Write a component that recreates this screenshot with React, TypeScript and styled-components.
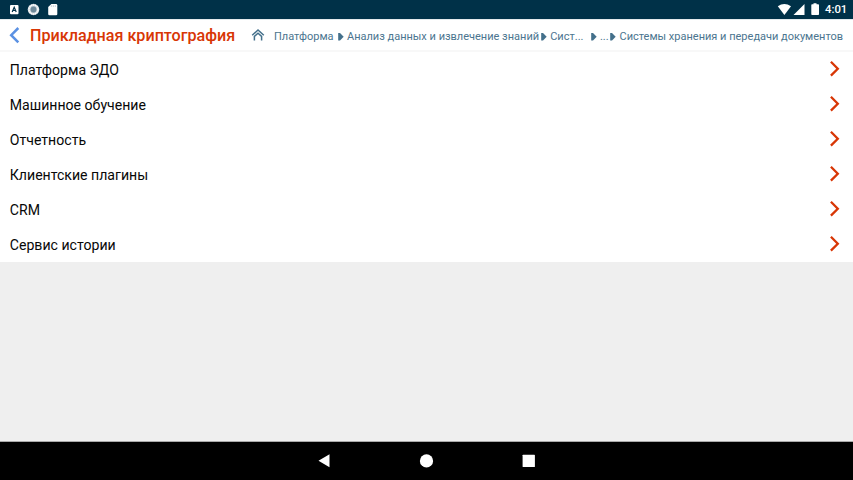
import React from "react";
import styled, { createGlobalStyle } from "styled-components";

const GlobalStyle = createGlobalStyle`
  * { box-sizing: border-box; }
  body { margin: 0; background: #efefef; font-family: Roboto, "Noto Sans", sans-serif; }
  svg { display: block; flex: none; }
`;

const Screen = styled.div`
  display: flex;
  flex-direction: column;
  width: 853px;
  height: 480px;
  overflow: hidden;
  background: #efefef;
`;

const StatusBar = styled.header`
  display: flex;
  justify-content: space-between;
  flex: none;
  height: 19px;
  background: #003148;
`;

const Clock = styled.time`
  width: 28px;
  font-size: 11.3px;
  font-weight: 500;
  line-height: 20px;
  color: #fff;
  white-space: nowrap;
`;

const StatusGroup = styled.div`
  display: flex;
`;

const Header = styled.nav`
  display: flex;
  flex: none;
  height: 33px;
  background: #fff;
  border-top: 1px solid #e4eaed;
  border-bottom: 2px solid #f8f8f8;
`;

const Title = styled.h1`
  flex: none;
  width: 221px;
  margin: 0;
  font-size: 16.15px;
  font-weight: 500;
  line-height: 31px;
  color: #d83605;
  white-space: nowrap;
`;

const Crumb = styled.span<{ $width: number }>`
  flex: none;
  width: ${(p) => p.$width}px;
  font-size: 11px;
  line-height: 34px;
  color: #4b758f;
  white-space: nowrap;
`;

const List = styled.ul`
  flex: none;
  margin: 0;
  padding: 0;
  list-style: none;
  background: #fff;
`;

const Row = styled.li`
  display: flex;
  justify-content: space-between;
  height: 35px;
  padding: 0 12px 0 9.8px;
  font-size: 14.1px;
  line-height: 36px;
  color: #080808;
`;

const NavBar = styled.footer`
  display: flex;
  justify-content: center;
  flex: none;
  height: 39px;
  margin-top: auto;
  background: #000;
  border-top: 1px solid #aaa;
`;

const Separator = () => (
  <svg width="10" height="30" viewBox="0 0 10 30">
    <path d="M1.2 13h1.8L6.7 16.8 3 20.6H1.2z" fill="#44708b" />
  </svg>
);

const RowArrow = () => (
  <svg width="12" height="35" viewBox="0 0 12 35">
    <path d="M1.9 9.8l6.9 6.9-6.9 6.9" fill="none" stroke="#d83605" strokeWidth="2.3" />
  </svg>
);

const StatusIcons = () => (
  <svg width="62" height="19" viewBox="0 0 62 19">
    <rect x="10" y="5" width="8.5" height="9.3" rx="1" fill="#fff" />
    <path d="M12.2 12l2-4.8 2 4.8M13 10.5h2.5" fill="none" stroke="#003148" strokeWidth="1.2" />
    <circle cx="33.5" cy="9.5" r="5.8" fill="#c5d0d7" />
    <circle cx="33.5" cy="9.5" r="4.5" fill="none" stroke="#fff" strokeWidth="1.4" strokeDasharray="1.5 .5" />
    <circle cx="33.5" cy="9.5" r="2.9" fill="#6d899a" />
    <path d="M51.4 4H56q1.3 0 1.3 1.3v8.6q0 1.3-1.3 1.3h-6.5q-1.3 0-1.3-1.3V7z" fill="#fff" />
    <path d="M51.3 5.3v1.6M53.3 5.3v1.6M55.3 5.3v1.6" stroke="#a3b5bf" strokeWidth=".7" />
  </svg>
);

const SignalIcons = () => (
  <svg width="48" height="19" viewBox="0 0 48 19">
    <path d="M.8 6.3Q7.3 1.7 14 6.3L7.4 15z" fill="#fff" />
    <path d="M27.5 4v11h-11z" fill="#fff" />
    <path d="M35.1 4.3h1.4V3.2h3v1.1h1.7q.8 0 .8.8v9.2q0 .8-.8.8h-6.1q-.8 0-.8-.8V5.1q0-.8.8-.8z" fill="#fff" />
  </svg>
);

const crumbs = [
  { text: "Платформа", width: 63 },
  { text: "Анализ данных и извлечение знаний", width: 193.2 },
  { text: "Сист...", width: 39.7 },
  { text: "...", width: 9.6 },
];

const sections = [
  "Платформа ЭДО",
  "Машинное обучение",
  "Отчетность",
  "Клиентские плагины",
  "CRM",
  "Сервис истории",
];

export default function App() {
  return (
    <Screen>
      <GlobalStyle />
      <StatusBar>
        <StatusIcons />
        <StatusGroup>
          <SignalIcons />
          <Clock>4:01</Clock>
        </StatusGroup>
      </StatusBar>
      <Header>
        <svg width="30" height="30" viewBox="0 0 30 30">
          <path d="M18.3 8l-7.1 7.2 7.1 7.2" fill="none" stroke="#5b91e3" strokeWidth="2.5" />
        </svg>
        <Title>Прикладная криптография</Title>
        <svg width="23" height="30" viewBox="0 0 23 30">
          <path d="M1.2 15.3L7 10l5.8 5.3M3.4 20.6v-4.2L7 13.3l3.6 3.1v4.2" fill="none" stroke="#44708b" strokeWidth="1.5" />
        </svg>
        {crumbs.map((crumb) => (
          <React.Fragment key={crumb.text}>
            <Crumb $width={crumb.width}>{crumb.text}</Crumb>
            <Separator />
          </React.Fragment>
        ))}
        <Crumb $width={230}>Системы хранения и передачи документов</Crumb>
      </Header>
      <List>
        {sections.map((name) => (
          <Row key={name}>
            {name}
            <RowArrow />
          </Row>
        ))}
      </List>
      <NavBar>
        <svg width="219" height="38" viewBox="0 0 219 38">
          <path d="M1.5 18.8l11-6.5v13z" fill="#fff" />
          <circle cx="109.5" cy="18.9" r="6.6" fill="#fff" />
          <rect x="205.6" y="12.7" width="12.3" height="12.3" rx=".6" fill="#fff" />
        </svg>
      </NavBar>
    </Screen>
  );
}
